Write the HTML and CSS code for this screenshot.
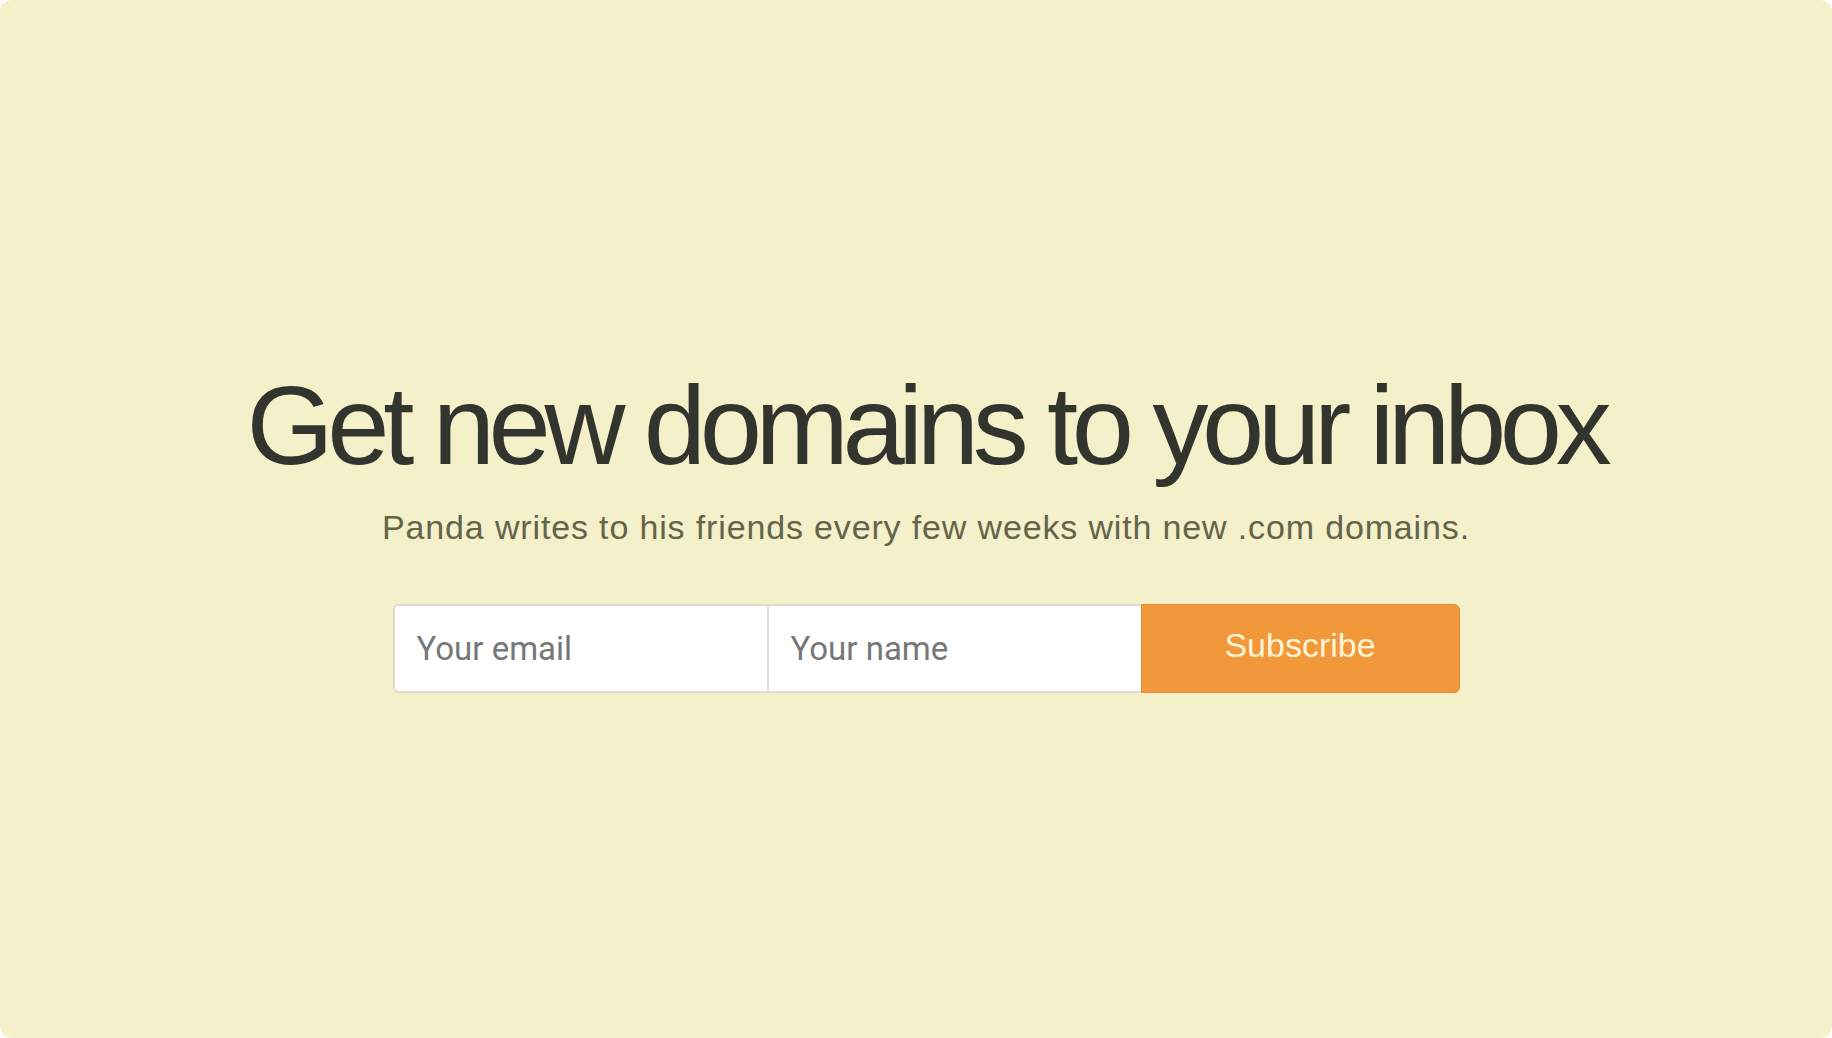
FILE: index.html
```html
<!DOCTYPE html>
<html lang="en">
<head>
    <meta charset="UTF-8">
    <meta name="viewport" content="width=device-width, initial-scale=1.0">
    <title>Get new domains to your inbox</title>
    <link rel="stylesheet" href="styles.css">
</head>
<body>
    <div class="page">
        <h1 class="title">Get new domains to your inbox</h1>
        <p class="lead">Panda writes to his friends every few weeks with new .com domains.</p>
        <form class="signup" onsubmit="return false;">
            <input class="field field-first" type="email" placeholder="Your email">
            <input class="field" type="text" placeholder="Your name">
            <button class="subscribe" type="submit">Subscribe</button>
        </form>
    </div>
</body>
</html>
```

FILE: styles.css
```css
* {
    box-sizing: border-box;
}
html, body {
    height: 100%;
    margin: 0;
}
body {
    background-color: #ffffff;
    font-family: "Liberation Sans", Arial, Helvetica, sans-serif;
}
.page {
    height: 100%;
    background-color: #f4f0ca;
    border-radius: 12px;
    display: flex;
    flex-direction: column;
    align-items: center;
    justify-content: center;
    padding: 25px 0 0 20px;
}
.title {
    margin: 0;
    font-size: 112px;
    font-weight: normal;
    line-height: 1;
    letter-spacing: -0.057em;
    color: #32342e;
}
.lead {
    margin: 25px 0 0 0;
    font-size: 34px;
    line-height: 1.2;
    color: #64644b;
    letter-spacing: 0.025em;
}
.signup {
    display: flex;
    margin-top: 56px;
    width: 1067px;
    height: 89px;
}
.field {
    width: 374px;
    height: 100%;
    margin: 0;
    padding: 0 22px;
    border: 2px solid #dedcd0;
    border-right: none;
    background: #ffffff;
    font-family: Roboto, "Liberation Sans", sans-serif;
    font-size: 33px;
    color: #333333;
    outline: none;
}
.field::placeholder {
    color: #777777;
}
.field-first {
    border-radius: 6px 0 0 6px;
}
.subscribe {
    flex: 1;
    height: 100%;
    margin: 0;
    border: 1px solid #e08b30;
    border-radius: 0 6px 6px 0;
    background-color: #f0983a;
    color: #fdf4d6;
    font-family: "Liberation Sans", Arial, sans-serif;
    font-size: 34px;
    padding-bottom: 6px;
    cursor: pointer;
}
```
